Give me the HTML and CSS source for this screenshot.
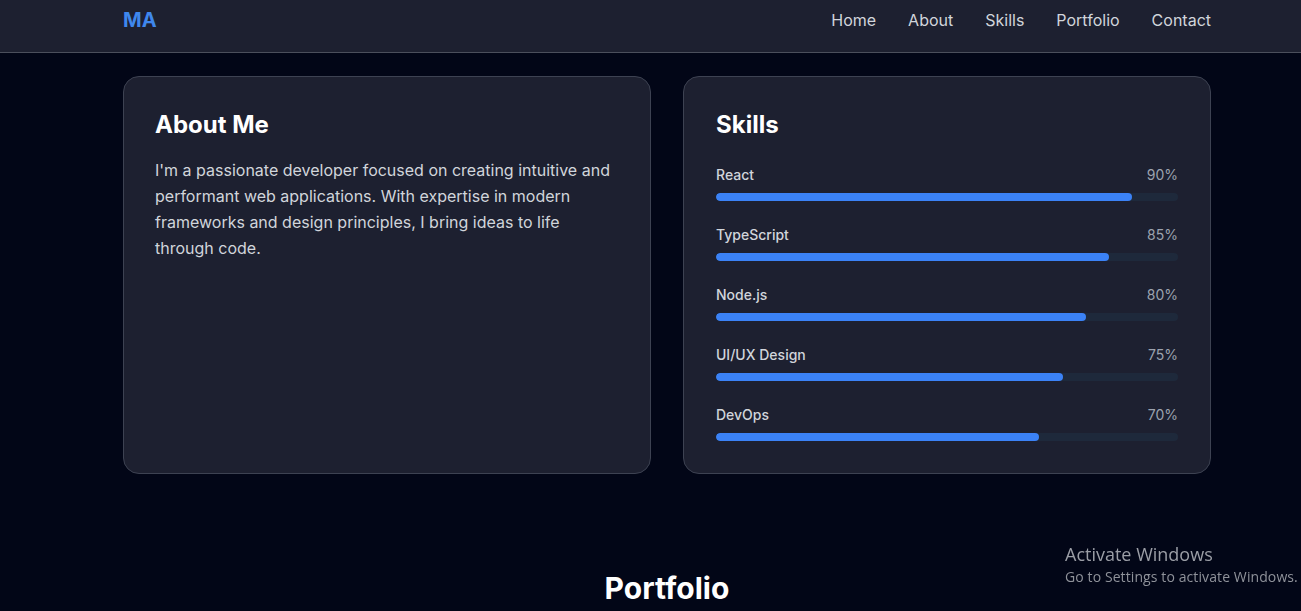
FILE: index.html
```html
<!DOCTYPE html>
<html lang="en">
<head>
<meta charset="utf-8">
<title>MA - Portfolio</title>
<link rel="stylesheet" href="styles.css">
</head>
<body>
<header class="site-header">
  <div class="container header-inner">
    <a class="logo" href="#">MA</a>
    <nav class="nav">
      <a href="#">Home</a>
      <a href="#">About</a>
      <a href="#">Skills</a>
      <a href="#">Portfolio</a>
      <a href="#">Contact</a>
    </nav>
  </div>
</header>
<main>
  <section class="container about-grid">
    <div class="card">
      <h2 class="card-title about-title">About Me</h2>
      <p class="about-text">I'm a passionate developer focused on creating intuitive and performant web applications. With expertise in modern frameworks and design principles, I bring ideas to life through code.</p>
    </div>
    <div class="card">
      <h2 class="card-title">Skills</h2>
      <div class="skills">
        <div class="skill">
          <div class="skill-head"><span class="skill-name">React</span><span class="skill-pct">90%</span></div>
          <div class="track"><div class="fill" style="width:90%"></div></div>
        </div>
        <div class="skill">
          <div class="skill-head"><span class="skill-name">TypeScript</span><span class="skill-pct">85%</span></div>
          <div class="track"><div class="fill" style="width:85%"></div></div>
        </div>
        <div class="skill">
          <div class="skill-head"><span class="skill-name">Node.js</span><span class="skill-pct">80%</span></div>
          <div class="track"><div class="fill" style="width:80%"></div></div>
        </div>
        <div class="skill">
          <div class="skill-head"><span class="skill-name">UI/UX Design</span><span class="skill-pct">75%</span></div>
          <div class="track"><div class="fill" style="width:75%"></div></div>
        </div>
        <div class="skill">
          <div class="skill-head"><span class="skill-name">DevOps</span><span class="skill-pct">70%</span></div>
          <div class="track"><div class="fill" style="width:70%"></div></div>
        </div>
      </div>
    </div>
  </section>
  <section class="container portfolio">
    <h2 class="section-title">Portfolio</h2>
  </section>
</main>
<div class="watermark">
  <div class="wm-title">Activate Windows</div>
  <div class="wm-sub">Go to Settings to activate Windows.</div>
</div>
</body>
</html>
```

FILE: styles.css
```css
* { box-sizing: border-box; }
html, body { margin: 0; padding: 0; }
body {
  background: #020617;
  color: #e5e7eb;
  font-family: Inter, "Noto Sans", sans-serif;
  overflow: hidden;
}
.container {
  width: 1088px;
  margin: 0 0 0 123px;
}
.site-header {
  background: #1d2030;
  border-bottom: 1px solid #4b4f5c;
  height: 53px;
}
.header-inner {
  display: flex;
  justify-content: space-between;
  align-items: flex-start;
  padding-top: 6px;
}
.logo {
  color: #3f87ec;
  font-weight: 700;
  font-size: 20px;
  line-height: 28px;
  text-decoration: none;
}
.nav {
  display: flex;
  gap: 32px;
}
.nav a {
  color: #d1d5db;
  text-decoration: none;
  font-size: 16px;
  line-height: 28px;
}
.about-grid {
  display: grid;
  grid-template-columns: 1fr 1fr;
  gap: 32px;
  padding-top: 23px;
}
.card {
  background: #1d2030;
  border: 1px solid #3d4252;
  border-radius: 16px;
  padding: 32px 32px 32px 32px;
}
.about-grid .card:first-child {
  padding-left: 31px;
}
.card-title {
  margin: 0 0 24px;
  font-size: 24px;
  line-height: 32px;
  font-weight: 700;
  color: #ffffff;
}
.about-title {
  margin-bottom: 16px;
}
.about-text {
  margin: 0;
  font-size: 16px;
  line-height: 26px;
  color: #d1d5db;
}
.skills {
  display: flex;
  flex-direction: column;
  gap: 24px;
}
.skill-head {
  display: flex;
  justify-content: space-between;
  font-size: 14px;
  line-height: 20px;
  margin-bottom: 8px;
}
.skill-name {
  color: #d1d5db;
  font-weight: 500;
}
.skill-pct {
  color: #9ca3af;
}
.track {
  height: 8px;
  border-radius: 4px;
  background: #1e293b;
  overflow: hidden;
}
.fill {
  height: 100%;
  background: #3b82f6;
  border-radius: 4px;
}
.portfolio {
  padding-top: 96px;
  text-align: center;
}
.section-title {
  margin: 0;
  font-size: 30px;
  line-height: 36px;
  font-weight: 700;
  color: #ffffff;
}
.watermark {
  position: fixed;
  left: 1065px;
  top: 542px;
  font-family: "Open Sans", "Noto Sans", sans-serif;
  color: #9b9ea6;
  white-space: nowrap;
}
.wm-title {
  font-size: 18px;
  line-height: 24px;
}
.wm-sub {
  font-size: 14px;
  line-height: 21px;
  letter-spacing: 0.1px;
  color: #8f929a;
}
```
